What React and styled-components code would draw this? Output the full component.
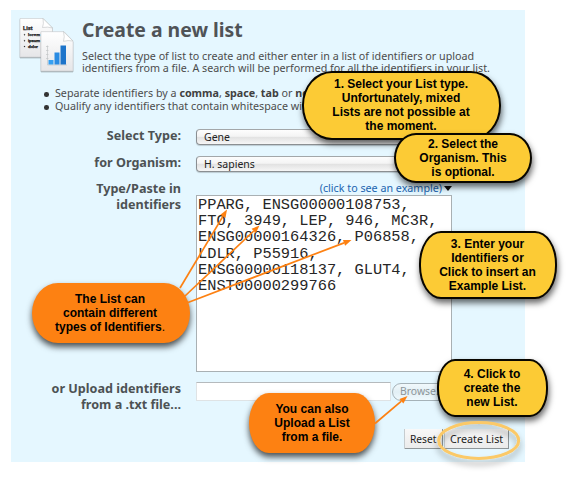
import React from 'react';
import styled, { createGlobalStyle, css } from 'styled-components';

const GlobalStyle = createGlobalStyle`
  *, *::before, *::after { box-sizing: border-box; }
  body { margin: 0; background: #fff; }
`;

const Page = styled.main`
  position: relative;
  width: 576px;
  height: 483px;
  padding: 10px 0 0 11px;
  overflow: hidden;
  font-family: 'Noto Sans', sans-serif;
  font-size: 10.72px;
  color: #4c4c4c;
`;

const Panel = styled.section`
  display: flex;
  flex-direction: column;
  width: 514px;
  height: 452px;
  background: #e5f7ff;
`;

const Header = styled.header`
  display: flex;
  height: 77px;
  padding: 8px 0 0 7px;
`;

const ListIcon = styled.svg`
  flex: none;
  width: 58px;
  height: 58px;
  margin: -1px 6px 0 0;
`;

const Title = styled.h1`
  margin: 0 0 7.5px;
  font-size: 19.4px;
  line-height: 24px;
  color: #4f5357;
  white-space: nowrap;
`;

const Line = styled.div`
  line-height: 12.7px;
  white-space: nowrap;
`;

const Hints = styled.ul`
  height: 41px;
  margin: 0;
  padding: 0 0 0 44px;
  list-style: none;
  line-height: 13px;
  white-space: nowrap;
`;

const Hint = styled.li`
  display: flex;
  white-space: pre;
  &::before {
    content: '';
    width: 4.6px;
    height: 4.6px;
    margin: 5px 6.4px 0 -11px;
    border-radius: 50%;
    background: #333;
  }
  b { color: #404040; }
`;

const Form = styled.div`
  display: grid;
  grid-template-columns: 170px 256px;
  grid-template-rows: 26.5px 26.5px 200px 48px 19px;
  column-gap: 15px;
`;

const Label = styled.label`
  font-size: 12.6px;
  font-weight: 700;
  line-height: 15.8px;
  text-align: right;
  white-space: pre-line;
  color: #4d5254;
`;

const Select = styled.div`
  height: 16px;
  margin-top: 1px;
  padding-left: 7px;
  border: 1px solid #8b8f92;
  border-top-color: #a3a7a9;
  border-radius: 4px;
  background: linear-gradient(#fdfdfd 0, #f4f4f4 45%, #e2e2e2 52%, #f6f6f6 100%);
  box-shadow: 0 1px 1px rgba(0, 0, 0, 0.18);
  font-size: 10.5px;
  line-height: 15px;
  color: #222;
`;

const Example = styled.div`
  display: flex;
  justify-content: flex-end;
  height: 14px;
  line-height: 15px;
  color: #2164b0;
  svg { width: 8px; height: 5px; margin: 5px 0 0 2px; }
`;

const Identifiers = styled.div`
  height: 177px;
  padding: 1px 0 0 1px;
  border: 1px solid #a9b0b3;
  background: #fff;
  font-family: 'Liberation Mono', monospace;
  font-size: 15.35px;
  line-height: 16.2px;
  white-space: pre;
  color: #262626;
`;

const Upload = styled.div`
  display: flex;
  gap: 1px;
  padding-top: 1px;
`;

const FileField = styled.div`
  flex: none;
  width: 195px;
  height: 19px;
  border: 1px solid #dfe3e5;
  border-top-color: #b5babd;
  background: #fff;
`;

const Browse = styled.div`
  flex: none;
  width: 62px;
  height: 18px;
  margin-top: 1px;
  padding-left: 7px;
  border: 1px solid #a5b2b8;
  border-radius: 9px;
  background: linear-gradient(#f1f9fc, #e2eff5 50%, #eff9fd);
  font-size: 10.4px;
  line-height: 15px;
  color: #8d9599;
`;

const Actions = styled.div`
  grid-column: 1 / -1;
  display: flex;
  gap: 2px;
  padding-left: 394px;
`;

const Button = styled.div`
  flex: none;
  width: ${p => p.$width}px;
  height: 20px;
  padding-left: 5px;
  border: solid #8f9699;
  border-width: 0 1px 1px 0;
  background: linear-gradient(#f8f8f8, #ebebeb);
  box-shadow: -1px 0 #c6cccf;
  font-size: ${p => p.$size}px;
  line-height: 20.5px;
  white-space: nowrap;
  color: #222;
`;

const Overlay = styled.svg`
  position: absolute;
  inset: 0;
  width: 576px;
  height: 483px;
`;

const tones = {
  yellow: css`
    border: 2px solid #080600;
    background: #fccb35;
    box-shadow: 1px 4px 6px rgba(0, 0, 0, 0.6);
  `,
  orange: css`
    background: #fd8112;
    box-shadow: 0 4px 6px rgba(0, 0, 0, 0.68);
  `,
};

const Callout = styled.aside`
  position: absolute;
  left: ${p => p.$x}px;
  top: ${p => p.$y}px;
  display: flex;
  align-items: center;
  justify-content: center;
  width: ${p => p.$w}px;
  height: ${p => p.$h}px;
  border-radius: ${p => p.$radius};
  font: 700 12px/14px 'Liberation Sans', sans-serif;
  text-align: center;
  white-space: pre;
  color: #000;
  ${p => tones[p.$tone]}
`;

const CalloutText = styled.div`
  padding: 0 ${p => p.$right || 0}px ${p => p.$bottom || 0}px 0;
`;

const Regular = styled.span`
  font-weight: 400;
`;

const Arrow = ({ x1, y1, x2, y2 }) => {
  const d = Math.hypot(x2 - x1, y2 - y1);
  const ux = (x2 - x1) / d;
  const uy = (y2 - y1) / d;
  const bx = x2 - ux * 8;
  const by = y2 - uy * 8;
  return (
    <g>
      <line x1={x1} y1={y1} x2={bx} y2={by} stroke="#fd8112" strokeWidth="1.7" />
      <path
        d={`M${x2} ${y2}L${bx - uy * 3} ${by + ux * 3}L${bx + uy * 3} ${by - ux * 3}Z`}
        fill="#fd8112"
      />
    </g>
  );
};

const identifiers = [
  'PPARG, ENSG00000108753,',
  'FTO, 3949, LEP, 946, MC3R,',
  'ENSG00000164326, P06858,',
  'LDLR, P55916,',
  'ENSG00000118137, GLUT4,',
  'ENST00000299766',
].join('\n');

const PagesIcon = () => (
  <ListIcon viewBox="0 0 58 58">
    <defs>
      <linearGradient id="sheet" x1="0" y1="0" x2="0" y2="1">
        <stop offset="0" stopColor="#fff" />
        <stop offset="1" stopColor="#e6e6e8" />
      </linearGradient>
      <filter id="sheetShadow" x="-20%" y="-20%" width="140%" height="150%">
        <feDropShadow dx="0" dy="0.7" stdDeviation="0.7" floodOpacity="0.55" />
      </filter>
    </defs>
    <g filter="url(#sheetShadow)">
      <path d="M2 1.5H25L34.5 11V40H2Z" fill="url(#sheet)" stroke="#c4c6c8" strokeWidth=".5" />
      <path d="M25 1.5Q26 7 24.5 10.5Q30 9.5 34.5 11Z" fill="#fff" stroke="#c0c2c4" strokeWidth=".6" />
    </g>
    <g fill="#111" fontFamily="Liberation Sans, sans-serif" fontWeight="700" stroke="#111" strokeWidth=".25">
      <text x="5" y="13.2" fontSize="5.4" textLength="9.5">List</text>
      <text x="10" y="19" fontSize="4.3" textLength="12">lorem</text>
      <text x="10" y="25" fontSize="4.3" textLength="12">ipsum</text>
      <text x="10" y="31" fontSize="4.3" textLength="10">dolor</text>
      <circle cx="6.5" cy="17.7" r=".5" />
      <circle cx="6.5" cy="23.7" r=".5" />
      <circle cx="6.5" cy="29.6" r=".5" />
    </g>
    <g filter="url(#sheetShadow)">
      <path d="M23 14.7H46L55 24V54H23Z" fill="url(#sheet)" stroke="#c4c6c8" strokeWidth=".5" />
      <path d="M45.5 14.7Q47 20 45.5 24.3Q50 23 55 24Z" fill="#fff" stroke="#c0c2c4" strokeWidth=".6" />
    </g>
    <path d="M29.5 28.5V48H49M28 29.5H30.5M28 33.5H30.5M28 37.5H30.5M28 41.5H30.5" fill="none" stroke="#c3c5c7" strokeWidth=".7" />
    <path d="M30.5 43H35.5V47.5H30.5Z" fill="#36a0f2" />
    <path d="M36.5 35.5H41.5V47.5H36.5Z" fill="#2a8be2" />
    <path d="M42.5 28.5H48V47.5H42.5Z" fill="#1d74ca" />
  </ListIcon>
);

export default function App() {
  return (
    <>
      <GlobalStyle />
      <Page>
        <Panel>
          <Header>
            <PagesIcon />
            <div>
              <Title>Create a new list</Title>
              <Line>Select the type of list to create and either enter in a list of identifiers or upload</Line>
              <Line>identifiers from a file. A search will be performed for all the identifiers in your list.</Line>
            </div>
          </Header>
          <Hints>
            <Hint>Separate identifiers by a <b>comma</b>, <b>space</b>, <b>tab</b> or <b>ne</b></Hint>
            <Hint>Qualify any identifiers that contain whitespace wit</Hint>
          </Hints>
          <Form>
            <Label>Select Type:</Label>
            <Select>Gene</Select>
            <Label>for Organism:</Label>
            <Select>H. sapiens</Select>
            <Label>{'Type/Paste in\nidentifiers'}</Label>
            <div>
              <Example>
                (click to see an example)
                <svg viewBox="0 0 8 5"><path d="M0 0H8L4 5Z" fill="#111" /></svg>
              </Example>
              <Identifiers>{identifiers}</Identifiers>
            </div>
            <Label>{'or Upload identifiers\nfrom a .txt file...'}</Label>
            <Upload>
              <FileField />
              <Browse>Browse.</Browse>
            </Upload>
            <Actions>
              <Button $width={38} $size={10.2}>Reset</Button>
              <Button $width={64} $size={10.72}>Create List</Button>
            </Actions>
          </Form>
        </Panel>

        <Callout $tone="yellow" $x={302} $y={71} $w={199} $h={69} $radius="30px / 34px">
          <CalloutText $right={1} $bottom={1}>{'1. Select your List type.\nUnfortunately, mixed\nLists are not possible at\nthe moment.'}</CalloutText>
        </Callout>
        <Callout $tone="yellow" $x={394} $y={133} $w={138} $h={50} $radius="22px / 25px">
          <CalloutText>{'2. Select the\nOrganism. This\nis optional.'}</CalloutText>
        </Callout>
        <Callout $tone="yellow" $x={419} $y={231} $w={138} $h={68} $radius="22px / 33px">
          <CalloutText $right={1}>{'3. Enter your\nIdentifiers or\nClick to insert an\nExample List.'}</CalloutText>
        </Callout>
        <Callout $tone="yellow" $x={437} $y={359} $w={111} $h={58} $radius="18px / 28px">
          <CalloutText $right={1} $bottom={1}>{'4. Click to\ncreate the\nnew List.'}</CalloutText>
        </Callout>
        <Callout $tone="orange" $x={32} $y={283} $w={158} $h={60} $radius="26px / 30px">
          <CalloutText $right={2}>{'The List can\ncontain different\ntypes of Identifiers'}<Regular>.</Regular></CalloutText>
        </Callout>
        <Callout $tone="orange" $x={249} $y={393} $w={126} $h={60} $radius="20px / 30px">
          <CalloutText>{'You can also\nUpload a List\nfrom a file.'}</CalloutText>
        </Callout>

        <Overlay viewBox="0 0 576 483">
          <defs>
            <filter id="ringShadow" x="-20%" y="-20%" width="140%" height="170%">
              <feDropShadow dx="0" dy="5" stdDeviation="3" floodOpacity="0.35" />
            </filter>
          </defs>
          <Arrow x1={180} y1={288} x2={227} y2={209.5} />
          <Arrow x1={185} y1={296} x2={259.5} y2={225.5} />
          <Arrow x1={188} y1={302.5} x2={351.5} y2={240} />
          <Arrow x1={375} y1={423.5} x2={407.5} y2={396} />
          <ellipse cx="478.7" cy="440.5" rx="40" ry="18" fill="none" stroke="#fbc968" strokeWidth="3" filter="url(#ringShadow)" />
        </Overlay>
      </Page>
    </>
  );
}
